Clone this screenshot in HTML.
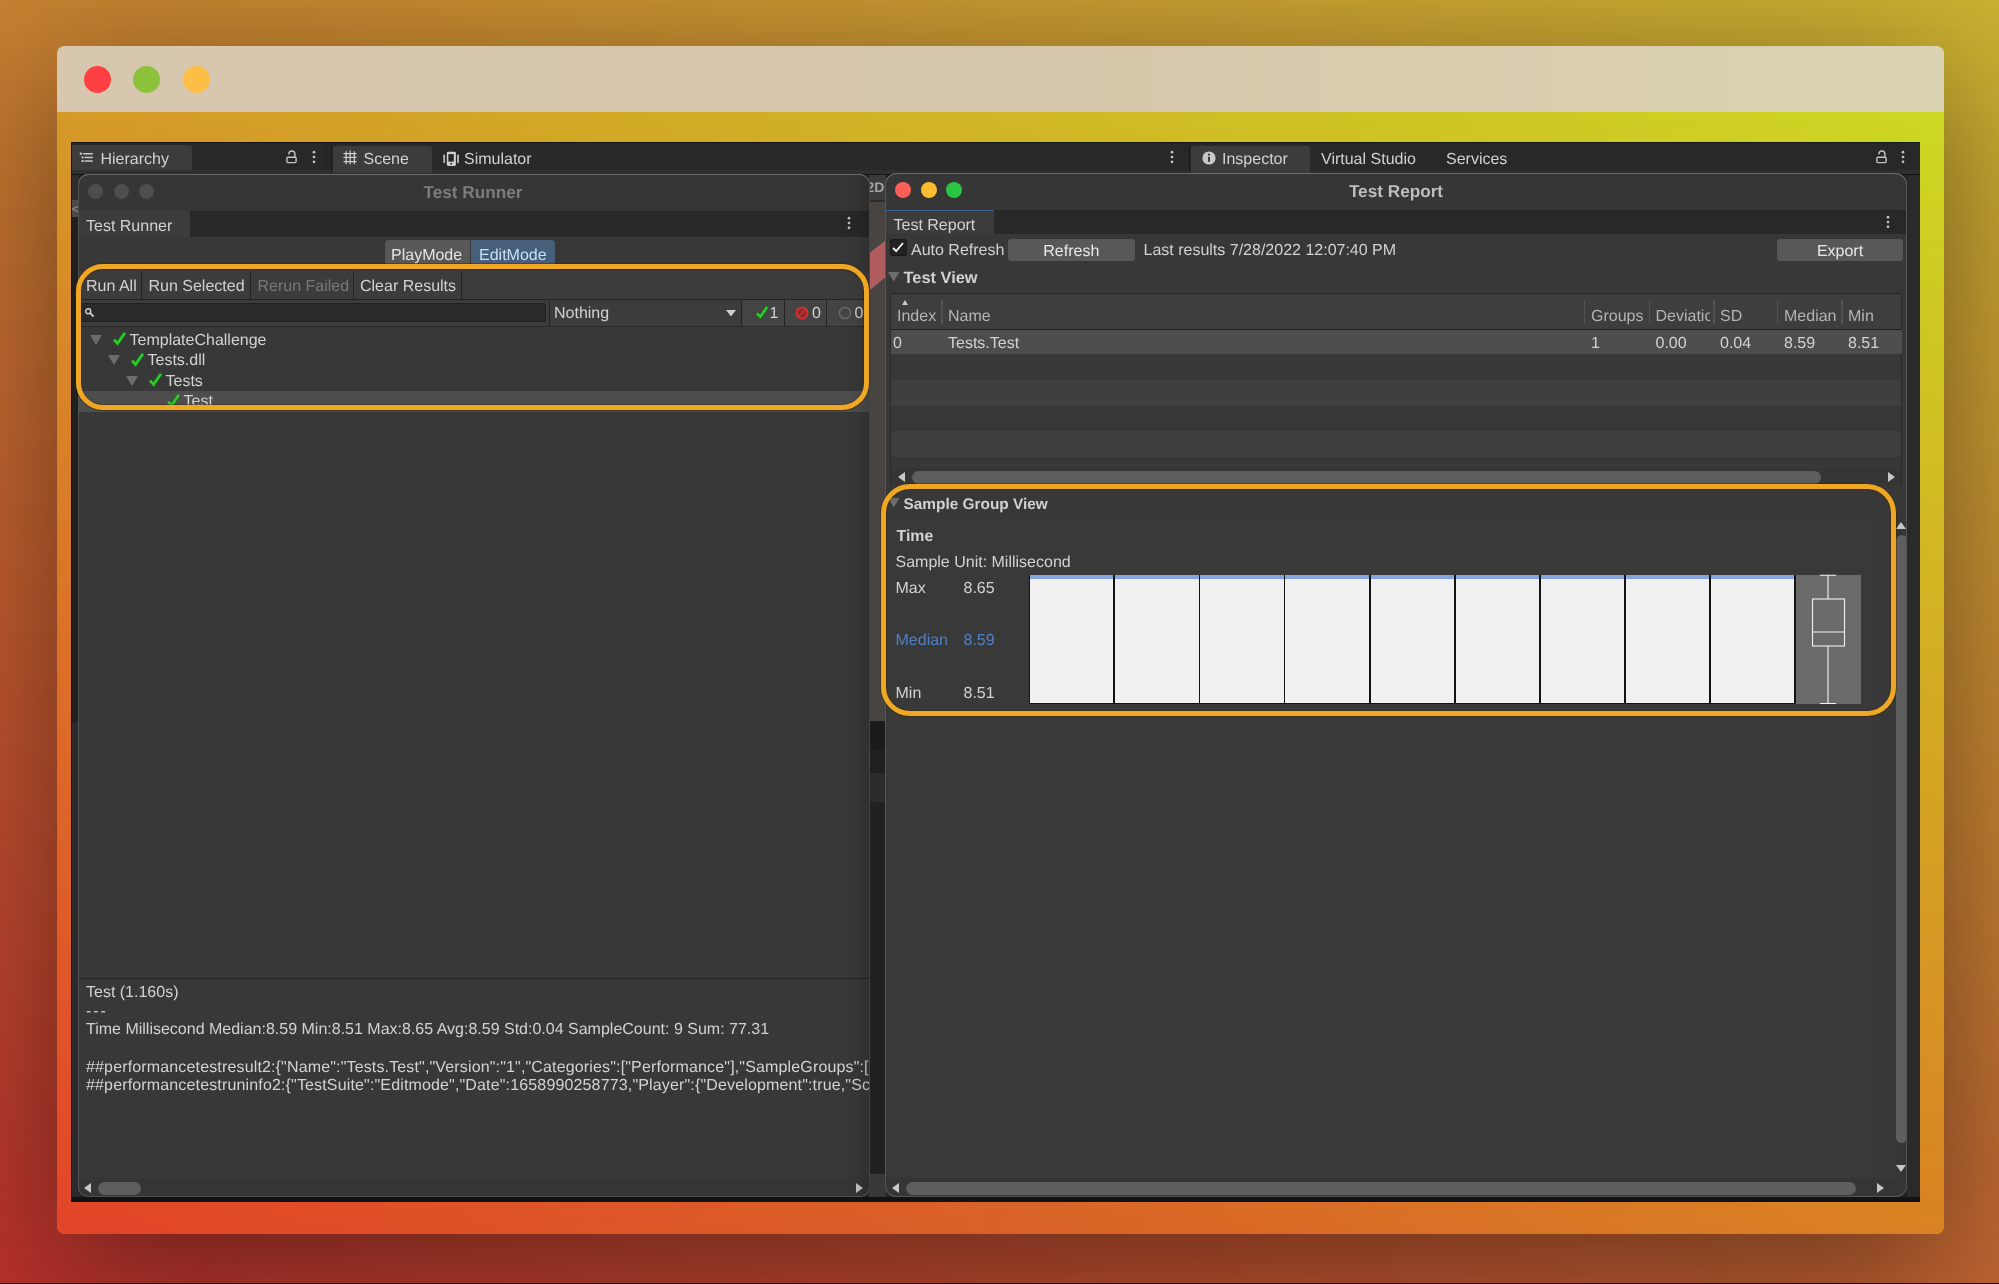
<!DOCTYPE html>
<html><head><meta charset="utf-8"><title>Test Runner</title><style>
html,body{margin:0;padding:0}
body{width:1999px;height:1284px;overflow:hidden;position:relative;background:#b86030;font-family:"Liberation Sans",sans-serif;font-size:16px;color:#d2d2d2;text-rendering:geometricPrecision}
#root{position:absolute;left:0;top:0;width:1999px;height:1284px;will-change:transform}
.b{position:absolute;box-sizing:border-box}
.t{position:absolute;line-height:20px;height:20px;white-space:nowrap;font-size:16px}
.bd{font-weight:bold}
.ttl{font-weight:bold;font-size:17.2px;letter-spacing:0}
#bg{position:absolute;left:0;top:0;width:1999px;height:1284px}
#bg .g1,#bg .g2{position:absolute;left:0;top:0;width:100%;height:100%}
#bg .g1{background:linear-gradient(to right,#c68131 0%,#cab332 100%)}
#bg .g2{background:linear-gradient(to right,#b9302d 0%,#bf6432 100%);-webkit-mask-image:linear-gradient(to bottom,rgba(0,0,0,0) 0%,rgba(0,0,0,1) 100%);mask-image:linear-gradient(to bottom,rgba(0,0,0,0) 0%,rgba(0,0,0,1) 100%)}
#bottomline{position:absolute;left:0;top:1282.5px;width:1999px;height:1.5px;background:#1a0404}
#win{position:absolute;left:56.5px;top:46px;width:1887.5px;height:1188px;border-radius:8px;overflow:hidden;box-shadow:0 35px 140px 0 rgba(0,0,0,0.45)}
#win .w1,#win .w2{position:absolute;left:0;top:0;width:100%;height:100%}
#win .w1{background:linear-gradient(to right,#d59a28 0%,#d0b826 50%,#cdd923 100%)}
#win .w2{background:linear-gradient(to right,#e24428 0%,#d96027 50%,#d98224 100%);-webkit-mask-image:linear-gradient(to bottom,rgba(0,0,0,0) 5%,rgba(0,0,0,1) 100%);mask-image:linear-gradient(to bottom,rgba(0,0,0,0) 5%,rgba(0,0,0,1) 100%)}
#tbar{position:absolute;left:0;top:0;width:100%;height:66px;background:linear-gradient(to right,#d8c7af 0%,#d6c6ab 50%,#dad3b3 100%)}
.tl{position:absolute;top:19.5px;width:27px;height:27px;border-radius:50%}
.hl{position:absolute;box-sizing:border-box;border:5.2px solid #efa724;box-shadow:0 0 0 0.8px rgba(60,35,0,0.55), inset 0 0 0 0.8px rgba(60,35,0,0.55)}
</style></head>
<body>
<div id="root">
<div id="bg"><div class="g1"></div><div class="g2"></div></div>
<div id="win"><div class="w1"></div><div class="w2"></div><div id="tbar"></div><div class="tl" style="left:27.5px;background:#fe4043"></div><div class="tl" style="left:76.5px;background:#8cc23a"></div><div class="tl" style="left:126px;background:#febd45"></div></div>
<div id="bottomline"></div>
<div class="b" style="left:70.5px;top:142px;width:1849.50px;height:1059.60px;background:#131313;"></div>
<div class="b" style="left:71.5px;top:143.2px;width:1848.50px;height:28.80px;background:#282828;"></div>
<div class="b" style="left:71.5px;top:169.6px;width:1848.50px;height:4.90px;background:#2f2f2f;"></div>
<div class="b" style="left:71.5px;top:145.2px;width:120.50px;height:24.80px;background:#3c3c3c;border-radius:0 3px 0 0"></div>
<svg class="b" style="left:79px;top:151px" width="16" height="13" viewBox="0 0 16 13"><g fill="#c8c8c8"><rect x="0.8" y="1.6" width="2.2" height="2.2"/><rect x="4.2" y="2" width="9.6" height="1.5"/><rect x="2.6" y="5.4" width="2" height="2"/><rect x="5.6" y="5.7" width="8.2" height="1.5"/><rect x="2.6" y="9" width="2" height="2"/><rect x="5.6" y="9.3" width="8.2" height="1.5"/></g></svg>
<div class="t " style="left:100.5px;top:150.00px;">Hierarchy</div>
<svg class="b" style="left:285.2px;top:150.3px" width="13" height="14" viewBox="0 0 13 14"><rect x="1.9" y="7.3" width="9.2" height="5.3" rx="1" fill="none" stroke="#c4c4c4" stroke-width="1.4"/><path d="M3.9 4.4 V4 A3 3 0 0 1 9.9 4 V7.3" fill="none" stroke="#c4c4c4" stroke-width="1.4"/></svg>
<svg class="b" style="left:311.6px;top:150px" width="4" height="14" viewBox="0 0 4 14"><circle cx="2" cy="2.2" r="1.35" fill="#c4c4c4"/><circle cx="2" cy="7" r="1.35" fill="#c4c4c4"/><circle cx="2" cy="11.8" r="1.35" fill="#c4c4c4"/></svg>
<div class="b" style="left:326px;top:145px;width:1.00px;height:25.00px;background:#202020;"></div>
<div class="b" style="left:331px;top:145px;width:1.00px;height:27.00px;background:#1a1a1a;"></div>
<div class="b" style="left:332.8px;top:145.6px;width:99.20px;height:27.40px;background:#3c3c3c;border-radius:3px 3px 0 0"></div>
<svg class="b" style="left:343px;top:150px" width="15" height="15" viewBox="0 0 15 15"><g stroke="#cdcdcd" stroke-width="1.25" fill="none"><path d="M3.2 1.2 V14.3 M7.2 0.4 V14.3 M11.3 1.2 V14.3 M0.5 3.6 H13.6 M0.5 7.45 H13.6 M0.5 11.5 H13.6"/></g></svg>
<div class="t " style="left:363.5px;top:150.00px;">Scene</div>
<svg class="b" style="left:442px;top:150px" width="18" height="17" viewBox="0 0 18 17"><rect x="4.8" y="1.7" width="9.1" height="14.3" rx="1.4" fill="#cfcfcf"/><rect x="6.35" y="4.1" width="5.45" height="7.5" fill="#262626"/><circle cx="9.2" cy="13.7" r="0.95" fill="#262626"/><rect x="1.4" y="4.5" width="1.5" height="8.7" rx="0.7" fill="#cfcfcf"/><rect x="15.25" y="4.5" width="1.6" height="8.7" rx="0.7" fill="#cfcfcf"/></svg>
<div class="t " style="left:464px;top:150.00px;">Simulator</div>
<svg class="b" style="left:1170px;top:150px" width="4" height="14" viewBox="0 0 4 14"><circle cx="2" cy="2.2" r="1.35" fill="#c4c4c4"/><circle cx="2" cy="7" r="1.35" fill="#c4c4c4"/><circle cx="2" cy="11.8" r="1.35" fill="#c4c4c4"/></svg>
<div class="b" style="left:1189px;top:145px;width:1.00px;height:27.00px;background:#1a1a1a;"></div>
<div class="b" style="left:1190.8px;top:145.6px;width:119.20px;height:27.40px;background:#3c3c3c;border-radius:3px 3px 0 0"></div>
<svg class="b" style="left:1202px;top:151px" width="14" height="14" viewBox="0 0 14 14"><circle cx="7" cy="7" r="6.6" fill="#c8c8c8"/><rect x="6" y="5.8" width="2" height="5" fill="#3c3c3c"/><circle cx="7" cy="3.6" r="1.15" fill="#3c3c3c"/></svg>
<div class="t " style="left:1222px;top:150.00px;">Inspector</div>
<div class="t " style="left:1321px;top:150.00px;">Virtual Studio</div>
<div class="t " style="left:1446px;top:150.00px;">Services</div>
<svg class="b" style="left:1874.7px;top:150.3px" width="13" height="14" viewBox="0 0 13 14"><rect x="1.9" y="7.3" width="9.2" height="5.3" rx="1" fill="none" stroke="#c4c4c4" stroke-width="1.4"/><path d="M3.9 4.4 V4 A3 3 0 0 1 9.9 4 V7.3" fill="none" stroke="#c4c4c4" stroke-width="1.4"/></svg>
<svg class="b" style="left:1901px;top:150px" width="4" height="14" viewBox="0 0 4 14"><circle cx="2" cy="2.2" r="1.35" fill="#c4c4c4"/><circle cx="2" cy="7" r="1.35" fill="#c4c4c4"/><circle cx="2" cy="11.8" r="1.35" fill="#c4c4c4"/></svg>
<div class="b" style="left:71.5px;top:174.5px;width:1848.50px;height:1026.50px;background:#222222;"></div>
<div class="b" style="left:71.5px;top:174.5px;width:7.50px;height:25.50px;background:#2e2e2e;"></div>
<div class="b" style="left:71.5px;top:200px;width:7.50px;height:17.00px;background:#4a4a4a;"></div>
<div class="t " style="left:71.5px;top:200.00px;color:#8a8a8a;font-size:15px">&lt;</div>
<div class="b" style="left:71.5px;top:217px;width:7.50px;height:505.00px;background:#202020;"></div>
<div class="b" style="left:71.5px;top:722px;width:7.50px;height:479.00px;background:#2a2a2c;"></div>
<div class="b" style="left:869px;top:174.5px;width:17.00px;height:25.00px;background:#3b3b3b;"></div>
<div class="b" style="left:869px;top:199.5px;width:17.00px;height:2.00px;background:#2c2c2c;"></div>
<div class="t bd" style="left:866.5px;top:177.00px;color:#a4a4a4;font-size:14px">2D</div>
<div class="b" style="left:869px;top:201.5px;width:17.00px;height:519.50px;background:#484442;"></div>
<svg class="b" style="left:869px;top:238px" width="16" height="56" viewBox="0 0 16 56"><path d="M1 14.5 L16 3 V39.5 L1 52 Z" fill="#b05d60"/></svg>
<div class="b" style="left:869px;top:721px;width:17.00px;height:29.00px;background:#1b1b1b;"></div>
<div class="b" style="left:869px;top:750px;width:17.00px;height:23.00px;background:#202020;"></div>
<div class="b" style="left:869px;top:773px;width:17.00px;height:29.00px;background:#2c2c2c;"></div>
<div class="b" style="left:869px;top:802px;width:17.00px;height:372.00px;background:#212121;"></div>
<div class="b" style="left:869px;top:1174px;width:17.00px;height:27.00px;background:#383838;"></div>
<div class="b" style="left:1907px;top:174.5px;width:13.00px;height:1022.50px;background:#2a2a2a;"></div>
<div class="b" style="left:71.5px;top:1197px;width:1848.50px;height:4.60px;background:#121212;"></div>
<div class="b" style="left:78px;top:174px;width:792px;height:1023px;overflow:hidden;border-radius:11px 11px 10px 10px;box-shadow:inset 0 0 0 1px #5a5a5a"><div class="b" style="left:-78px;top:-174px;width:1999px;height:1284px"><div class="b" style="left:78px;top:174px;width:792.00px;height:1023.00px;background:#383838;"></div><div class="b" style="left:78px;top:174px;width:792.00px;height:36.50px;background:#363636;"></div><div class="b" style="left:88.0px;top:183.8px;width:15.2px;height:15.2px;border-radius:50%;background:#4e4e4e"></div><div class="b" style="left:113.60000000000001px;top:183.8px;width:15.2px;height:15.2px;border-radius:50%;background:#4e4e4e"></div><div class="b" style="left:139.20000000000002px;top:183.8px;width:15.2px;height:15.2px;border-radius:50%;background:#4e4e4e"></div><div class="t ttl" style="left:273px;width:400px;text-align:center;top:182.00px;color:#7c7c7c">Test Runner</div><div class="b" style="left:78px;top:210.5px;width:792.00px;height:26.70px;background:#282828;"></div><div class="b" style="left:78px;top:211px;width:112.20px;height:26.20px;background:#3c3c3c;"></div><div class="t " style="left:86px;top:217.00px;">Test Runner</div><svg class="b" style="left:847px;top:215.5px" width="4" height="14" viewBox="0 0 4 14"><circle cx="2" cy="2.2" r="1.35" fill="#c4c4c4"/><circle cx="2" cy="7" r="1.35" fill="#c4c4c4"/><circle cx="2" cy="11.8" r="1.35" fill="#c4c4c4"/></svg><div class="b" style="left:385px;top:240px;width:85.00px;height:28.00px;background:#585858;border-radius:4px 0 0 0"></div><div class="b" style="left:470.5px;top:240px;width:84.50px;height:28.00px;background:#46607c;border-radius:0 4px 0 0"></div><div class="t " style="left:391px;top:246.00px;color:#e4e4e4">PlayMode</div><div class="t " style="left:479px;top:246.00px;color:#c9dff7">EditMode</div><div class="b" style="left:78px;top:270.5px;width:792.00px;height:29.00px;background:#3c3c3c;"></div><div class="b" style="left:78px;top:299px;width:792.00px;height:1.00px;background:#232323;"></div><div class="b" style="left:140.5px;top:270.5px;width:1.00px;height:28.50px;background:#242424;"></div><div class="b" style="left:250.0px;top:270.5px;width:1.00px;height:28.50px;background:#242424;"></div><div class="b" style="left:352.5px;top:270.5px;width:1.00px;height:28.50px;background:#242424;"></div><div class="b" style="left:460.5px;top:270.5px;width:1.00px;height:28.50px;background:#242424;"></div><div class="t " style="left:86px;top:277.00px;">Run All</div><div class="t " style="left:148.5px;top:277.00px;">Run Selected</div><div class="t " style="left:257.5px;top:277.00px;color:#787878">Rerun Failed</div><div class="t " style="left:360px;top:277.00px;">Clear Results</div><div class="b" style="left:78px;top:300px;width:792.00px;height:26.50px;background:#3c3c3c;"></div><div class="b" style="left:78px;top:326px;width:792.00px;height:1.00px;background:#2a2a2a;"></div><div class="b" style="left:81px;top:302.5px;width:464.50px;height:19.50px;background:#2a2a2a;border-radius:3px;box-shadow:inset 0 0 0 1px #212121"></div><svg class="b" style="left:84px;top:307px" width="11" height="11" viewBox="0 0 11 11"><circle cx="4.2" cy="4.2" r="2.5" fill="none" stroke="#cfcfcf" stroke-width="1.4"/><path d="M6.2 6.2 L9.6 9.6" stroke="#cfcfcf" stroke-width="1.9"/></svg><div class="b" style="left:548.5px;top:300px;width:1.00px;height:26.00px;background:#242424;"></div><div class="t " style="left:554px;top:304.00px;">Nothing</div><svg class="b" style="left:726.0px;top:309.55px" width="10" height="6.5" viewBox="0 0 10 6.5"><path d="M0 0 H10 L5.0 6.5 Z" fill="#d0d0d0"/></svg><div class="b" style="left:741px;top:300px;width:129.00px;height:26.00px;background:#444444;"></div><div class="b" style="left:740.5px;top:300px;width:1.00px;height:26.00px;background:#242424;"></div><div class="b" style="left:783.5px;top:300px;width:1.00px;height:26.00px;background:#242424;"></div><div class="b" style="left:825.5px;top:300px;width:1.00px;height:26.00px;background:#242424;"></div><svg class="b" style="left:754.875px;top:304.875px" width="14.25" height="14.25" viewBox="0 0 15 15"><path d="M2 8.6 L5.6 12.6 L13 1.8" fill="none" stroke="#1c8c1c" stroke-width="3.5" stroke-linejoin="miter"/><path d="M2.2 8.8 L5.6 12.4 L12.8 2" fill="none" stroke="#2fd22f" stroke-width="2" stroke-linejoin="miter"/></svg><div class="t " style="left:769.5px;top:304.00px;">1</div><svg class="b" style="left:795.3px;top:305.8px" width="14" height="14" viewBox="0 0 14 14"><circle cx="7" cy="7" r="5.5" fill="#8e2a2a" stroke="#c93131" stroke-width="2.2"/><path d="M3.4 10.6 L10.6 3.4" stroke="#c93131" stroke-width="1.8"/></svg><div class="t " style="left:812px;top:304.00px;">0</div><svg class="b" style="left:837.5px;top:306px" width="14" height="14" viewBox="0 0 14 14"><circle cx="7" cy="7" r="5.6" fill="none" stroke="#6a6a6a" stroke-width="1.5"/></svg><div class="t " style="left:854.5px;top:304.00px;">0</div><div class="b" style="left:78px;top:391px;width:792.00px;height:20.50px;background:#4d4d4d;"></div><svg class="b" style="left:90.0px;top:334.5px" width="12" height="10" viewBox="0 0 12 10"><path d="M0 0 H12 L6.0 10 Z" fill="#6c6c6c"/></svg><svg class="b" style="left:112.0px;top:331.0px" width="15.0" height="15.0" viewBox="0 0 15 15"><path d="M2 8.6 L5.6 12.6 L13 1.8" fill="none" stroke="#1c8c1c" stroke-width="3.5" stroke-linejoin="miter"/><path d="M2.2 8.8 L5.6 12.4 L12.8 2" fill="none" stroke="#2fd22f" stroke-width="2" stroke-linejoin="miter"/></svg><div class="t " style="left:129.5px;top:331.00px;">TemplateChallenge</div><svg class="b" style="left:108.0px;top:355.0px" width="12" height="10" viewBox="0 0 12 10"><path d="M0 0 H12 L6.0 10 Z" fill="#6c6c6c"/></svg><svg class="b" style="left:130.0px;top:351.5px" width="15.0" height="15.0" viewBox="0 0 15 15"><path d="M2 8.6 L5.6 12.6 L13 1.8" fill="none" stroke="#1c8c1c" stroke-width="3.5" stroke-linejoin="miter"/><path d="M2.2 8.8 L5.6 12.4 L12.8 2" fill="none" stroke="#2fd22f" stroke-width="2" stroke-linejoin="miter"/></svg><div class="t " style="left:147.5px;top:351.00px;">Tests.dll</div><svg class="b" style="left:126.0px;top:375.5px" width="12" height="10" viewBox="0 0 12 10"><path d="M0 0 H12 L6.0 10 Z" fill="#6c6c6c"/></svg><svg class="b" style="left:148.0px;top:372.0px" width="15.0" height="15.0" viewBox="0 0 15 15"><path d="M2 8.6 L5.6 12.6 L13 1.8" fill="none" stroke="#1c8c1c" stroke-width="3.5" stroke-linejoin="miter"/><path d="M2.2 8.8 L5.6 12.4 L12.8 2" fill="none" stroke="#2fd22f" stroke-width="2" stroke-linejoin="miter"/></svg><div class="t " style="left:165.5px;top:372.00px;">Tests</div><svg class="b" style="left:166.0px;top:392.5px" width="15.0" height="15.0" viewBox="0 0 15 15"><path d="M2 8.6 L5.6 12.6 L13 1.8" fill="none" stroke="#1c8c1c" stroke-width="3.5" stroke-linejoin="miter"/><path d="M2.2 8.8 L5.6 12.4 L12.8 2" fill="none" stroke="#2fd22f" stroke-width="2" stroke-linejoin="miter"/></svg><div class="t " style="left:183.5px;top:392.00px;">Test</div><div class="b" style="left:78px;top:977.5px;width:792.00px;height:1.30px;background:#232323;"></div><div class="t " style="left:86px;top:983.00px;">Test (1.160s)</div><div class="t " style="left:86px;top:1002.00px;letter-spacing:1.9px">---</div><div class="t " style="left:86px;top:1020.00px;">Time Millisecond Median:8.59 Min:8.51 Max:8.65 Avg:8.59 Std:0.04 SampleCount: 9 Sum: 77.31</div><div class="t " style="left:86px;top:1058.00px;letter-spacing:0.15px">##performancetestresult2:{&quot;Name&quot;:&quot;Tests.Test&quot;,&quot;Version&quot;:&quot;1&quot;,&quot;Categories&quot;:[&quot;Performance&quot;],&quot;SampleGroups&quot;:[{</div><div class="t " style="left:86px;top:1076.00px;letter-spacing:0.15px">##performancetestruninfo2:{&quot;TestSuite&quot;:&quot;Editmode&quot;,&quot;Date&quot;:1658990258773,&quot;Player&quot;:{&quot;Development&quot;:true,&quot;Scr</div><div class="b" style="left:78px;top:1177.5px;width:792.00px;height:19.50px;background:#353535;"></div><svg class="b" style="left:84.0px;top:1183px" width="7" height="10" viewBox="0 0 7 10"><path d="M7 0 V10 L0 5 Z" fill="#c8c8c8"/></svg><svg class="b" style="left:855.5px;top:1183px" width="7" height="10" viewBox="0 0 7 10"><path d="M0 0 V10 L7 5 Z" fill="#c8c8c8"/></svg><div class="b" style="left:98px;top:1182px;width:42.50px;height:12.50px;background:#5e5e5e;border-radius:6.5px"></div></div></div>
<div class="b" style="left:78px;top:174px;width:792px;height:1023px;border-radius:11px 11px 10px 10px;box-shadow:inset 0 1px 0 0 #6a6a6a, inset 0 0 0 1px #505050;"></div>
<div class="b" style="left:842px;top:175px;width:27.5px;height:1021px;border-radius:0 11px 10px 0;background:linear-gradient(to right,rgba(0,0,0,0),rgba(0,0,0,0.05) 50%,rgba(0,0,0,0.16))"></div>
<div class="b" style="left:884.8px;top:173px;width:1022.7px;height:1024px;overflow:hidden;border-radius:12px 12px 11px 11px"><div class="b" style="left:-884.8px;top:-173px;width:1999px;height:1284px"><div class="b" style="left:884.8px;top:173px;width:1022.70px;height:1024.00px;background:#383838;"></div><div class="b" style="left:884.8px;top:173px;width:1022.70px;height:36.70px;background:#363636;"></div><div class="b" style="left:894.5px;top:182px;width:16px;height:16px;border-radius:50%;background:#fe5f57"></div><div class="b" style="left:920.7px;top:182px;width:16px;height:16px;border-radius:50%;background:#febc2e"></div><div class="b" style="left:946.3px;top:182px;width:16px;height:16px;border-radius:50%;background:#29c740"></div><div class="t ttl" style="left:1196px;width:400px;text-align:center;top:181.00px;color:#bdbdbd">Test Report</div><div class="b" style="left:884.8px;top:209.7px;width:1022.70px;height:24.10px;background:#282828;"></div><div class="b" style="left:884.8px;top:209.7px;width:109.20px;height:24.10px;background:#3c3c3c;"></div><div class="b" style="left:884.8px;top:209.7px;width:109.20px;height:1.70px;background:#3a6394;"></div><div class="t " style="left:893.5px;top:216.00px;">Test Report</div><svg class="b" style="left:1885.5px;top:214.5px" width="4" height="14" viewBox="0 0 4 14"><circle cx="2" cy="2.2" r="1.35" fill="#c4c4c4"/><circle cx="2" cy="7" r="1.35" fill="#c4c4c4"/><circle cx="2" cy="11.8" r="1.35" fill="#c4c4c4"/></svg><div class="b" style="left:889.5px;top:239px;width:17.00px;height:17.00px;background:#222222;border-radius:3px;box-shadow:inset 0 0 0 1px #1a1a1a"></div><svg class="b" style="left:891px;top:241px" width="14" height="13" viewBox="0 0 14 13"><path d="M2 7 L5.2 10 L12 2" fill="none" stroke="#f0f0f0" stroke-width="1.9"/></svg><div class="t " style="left:911px;top:241.00px;">Auto Refresh</div><div class="b" style="left:1008px;top:239px;width:126.50px;height:21.50px;background:#585858;border-radius:3px"></div><div class="t " style="left:871.3px;width:400px;text-align:center;top:242.00px;color:#e8e8e8">Refresh</div><div class="t " style="left:1143.5px;top:241.00px;">Last results 7/28/2022 12:07:40 PM</div><div class="b" style="left:1777px;top:239px;width:126.00px;height:21.50px;background:#585858;border-radius:3px"></div><div class="t " style="left:1640px;width:400px;text-align:center;top:242.00px;color:#e8e8e8">Export</div><svg class="b" style="left:888.25px;top:272.25px" width="11.5" height="9.5" viewBox="0 0 11.5 9.5"><path d="M0 0 H11.5 L5.75 9.5 Z" fill="#6c6c6c"/></svg><div class="t bd" style="left:903.5px;top:268.00px;font-size:16.4px">Test View</div><div class="b" style="left:890.5px;top:293px;width:1011.50px;height:174.00px;background:#383838;"></div><div class="b" style="left:890.5px;top:293px;width:1011.50px;height:36.00px;background:#3e3e3e;"></div><div class="b" style="left:890.5px;top:292.5px;width:1011.50px;height:1.30px;background:#262626;"></div><div class="b" style="left:890.5px;top:328.5px;width:1011.50px;height:1.30px;background:#1f1f1f;"></div><div class="b" style="left:890.0px;top:293px;width:1.20px;height:193.00px;background:#2a2a2a;"></div><div class="b" style="left:1901.3px;top:293px;width:1.20px;height:193.00px;background:#2a2a2a;"></div><div class="b" style="left:890.5px;top:329.8px;width:1011.50px;height:24.70px;background:#4d4d4d;"></div><div class="b" style="left:891.2px;top:354.5px;width:1010.10px;height:25.50px;background:#383838;"></div><div class="b" style="left:891.2px;top:380px;width:1010.10px;height:25.50px;background:#3f3f3f;"></div><div class="b" style="left:891.2px;top:405.5px;width:1010.10px;height:25.50px;background:#383838;"></div><div class="b" style="left:891.2px;top:431px;width:1010.10px;height:25.50px;background:#3f3f3f;"></div><div class="b" style="left:891.2px;top:456.5px;width:1010.10px;height:11.00px;background:#383838;"></div><div class="b" style="left:941.4px;top:299.5px;width:1.20px;height:24.00px;background:#525252;"></div><div class="b" style="left:1583.9px;top:299.5px;width:1.20px;height:24.00px;background:#525252;"></div><div class="b" style="left:1648.9px;top:299.5px;width:1.20px;height:24.00px;background:#525252;"></div><div class="b" style="left:1713.4px;top:299.5px;width:1.20px;height:24.00px;background:#525252;"></div><div class="b" style="left:1776.9px;top:299.5px;width:1.20px;height:24.00px;background:#525252;"></div><div class="b" style="left:1841.4px;top:299.5px;width:1.20px;height:24.00px;background:#525252;"></div><div class="t " style="left:897px;top:307.00px;color:#b4b4b4">Index</div><div class="t " style="left:948px;top:307.00px;color:#b4b4b4">Name</div><div class="t " style="left:1591px;top:307.00px;color:#b4b4b4">Groups</div><div class="b" style="left:1655.5px;top:307px;width:54.0px;height:20px;overflow:hidden"><div class="t" style="left:0;top:0;color:#b4b4b4">Deviation</div></div><div class="t " style="left:1720px;top:307.00px;color:#b4b4b4">SD</div><div class="t " style="left:1784px;top:307.00px;color:#b4b4b4">Median</div><div class="t " style="left:1848px;top:307.00px;color:#b4b4b4">Min</div><svg class="b" style="left:902px;top:300px" width="6" height="5" viewBox="0 0 6 5"><path d="M0 5 H6 L3 0 Z" fill="#c8c8c8"/></svg><div class="t " style="left:893px;top:334.00px;">0</div><div class="t " style="left:948px;top:334.00px;">Tests.Test</div><div class="t " style="left:1591px;top:334.00px;">1</div><div class="t " style="left:1655.5px;top:334.00px;">0.00</div><div class="t " style="left:1720px;top:334.00px;">0.04</div><div class="t " style="left:1784px;top:334.00px;">8.59</div><div class="t " style="left:1848px;top:334.00px;">8.51</div><div class="b" style="left:891.2px;top:467.5px;width:1010.10px;height:18.50px;background:#353535;"></div><svg class="b" style="left:897.5px;top:472px" width="7" height="10" viewBox="0 0 7 10"><path d="M7 0 V10 L0 5 Z" fill="#c8c8c8"/></svg><svg class="b" style="left:1887.5px;top:472px" width="7" height="10" viewBox="0 0 7 10"><path d="M0 0 V10 L7 5 Z" fill="#c8c8c8"/></svg><div class="b" style="left:912px;top:470.5px;width:908.50px;height:13.00px;background:#5e5e5e;border-radius:6.5px"></div><div class="b" style="left:884.8px;top:519px;width:992.70px;height:658.00px;background:#393939;"></div><svg class="b" style="left:888.25px;top:498.25px" width="11.5" height="9.5" viewBox="0 0 11.5 9.5"><path d="M0 0 H11.5 L5.75 9.5 Z" fill="#6c6c6c"/></svg><div class="t bd" style="left:903.5px;top:495.00px;font-size:15.4px">Sample Group View</div><div class="t bd" style="left:896.5px;top:527.00px;font-size:15.9px">Time</div><div class="t " style="left:895.5px;top:553.00px;">Sample Unit: Millisecond</div><div class="t " style="left:895.5px;top:579.00px;">Max</div><div class="t " style="left:963.5px;top:579.00px;">8.65</div><div class="t " style="left:895.5px;top:631.00px;color:#4f80c4">Median</div><div class="t " style="left:963.5px;top:631.00px;color:#4f80c4">8.59</div><div class="t " style="left:895.5px;top:684.00px;">Min</div><div class="t " style="left:963.5px;top:684.00px;">8.51</div><div class="b" style="left:1029.2px;top:574.6px;width:766.80px;height:129.30px;background:#141414;"></div><div class="b" style="left:1030.1px;top:575px;width:83.32px;height:128.20px;background:#f1f1f1;"></div><div class="b" style="left:1030.1px;top:575px;width:83.32px;height:3.80px;background:#86a5dd;"></div><div class="b" style="left:1030.1px;top:578.8px;width:83.32px;height:1.20px;background:#e4eaf4;"></div><div class="b" style="left:1115.2199999999998px;top:575px;width:83.32px;height:128.20px;background:#f1f1f1;"></div><div class="b" style="left:1115.2199999999998px;top:575px;width:83.32px;height:3.80px;background:#86a5dd;"></div><div class="b" style="left:1115.2199999999998px;top:578.8px;width:83.32px;height:1.20px;background:#e4eaf4;"></div><div class="b" style="left:1200.34px;top:575px;width:83.32px;height:128.20px;background:#f1f1f1;"></div><div class="b" style="left:1200.34px;top:575px;width:83.32px;height:3.80px;background:#86a5dd;"></div><div class="b" style="left:1200.34px;top:578.8px;width:83.32px;height:1.20px;background:#e4eaf4;"></div><div class="b" style="left:1285.46px;top:575px;width:83.32px;height:128.20px;background:#f1f1f1;"></div><div class="b" style="left:1285.46px;top:575px;width:83.32px;height:3.80px;background:#86a5dd;"></div><div class="b" style="left:1285.46px;top:578.8px;width:83.32px;height:1.20px;background:#e4eaf4;"></div><div class="b" style="left:1370.58px;top:575px;width:83.32px;height:128.20px;background:#f1f1f1;"></div><div class="b" style="left:1370.58px;top:575px;width:83.32px;height:3.80px;background:#86a5dd;"></div><div class="b" style="left:1370.58px;top:578.8px;width:83.32px;height:1.20px;background:#e4eaf4;"></div><div class="b" style="left:1455.6999999999998px;top:575px;width:83.32px;height:128.20px;background:#f1f1f1;"></div><div class="b" style="left:1455.6999999999998px;top:575px;width:83.32px;height:3.80px;background:#86a5dd;"></div><div class="b" style="left:1455.6999999999998px;top:578.8px;width:83.32px;height:1.20px;background:#e4eaf4;"></div><div class="b" style="left:1540.82px;top:575px;width:83.32px;height:128.20px;background:#f1f1f1;"></div><div class="b" style="left:1540.82px;top:575px;width:83.32px;height:3.80px;background:#86a5dd;"></div><div class="b" style="left:1540.82px;top:578.8px;width:83.32px;height:1.20px;background:#e4eaf4;"></div><div class="b" style="left:1625.94px;top:575px;width:83.32px;height:128.20px;background:#f1f1f1;"></div><div class="b" style="left:1625.94px;top:575px;width:83.32px;height:3.80px;background:#86a5dd;"></div><div class="b" style="left:1625.94px;top:578.8px;width:83.32px;height:1.20px;background:#e4eaf4;"></div><div class="b" style="left:1711.06px;top:575px;width:83.32px;height:128.20px;background:#f1f1f1;"></div><div class="b" style="left:1711.06px;top:575px;width:83.32px;height:3.80px;background:#86a5dd;"></div><div class="b" style="left:1711.06px;top:578.8px;width:83.32px;height:1.20px;background:#e4eaf4;"></div><div class="b" style="left:1796px;top:575px;width:65.00px;height:128.50px;background:#6a6a6a;"></div><svg class="b" style="left:1796px;top:573px" width="65" height="133" viewBox="0 0 65 133"><g stroke="#f2f2f2" stroke-width="1.1" fill="none"><path d="M24 2.3 H40 M32 2.3 V26 M32 73 V130.5 M24 130.5 H40 M16.5 59 H48.5"/><rect x="16.5" y="26" width="32" height="47"/></g></svg><div class="b" style="left:1895.5px;top:519px;width:12.00px;height:658.00px;background:#353535;"></div><svg class="b" style="left:1896px;top:521.5px" width="10" height="7" viewBox="0 0 10 7"><path d="M0 7 H10 L5 0 Z" fill="#c8c8c8"/></svg><svg class="b" style="left:1896px;top:1165.0px" width="10" height="7" viewBox="0 0 10 7"><path d="M0 0 H10 L5 7 Z" fill="#c8c8c8"/></svg><div class="b" style="left:1896px;top:535px;width:11.00px;height:608.00px;background:#5e5e5e;border-radius:5.5px"></div><div class="b" style="left:884.8px;top:1177.5px;width:1022.70px;height:19.50px;background:#353535;"></div><svg class="b" style="left:891.5px;top:1183px" width="7" height="10" viewBox="0 0 7 10"><path d="M7 0 V10 L0 5 Z" fill="#c8c8c8"/></svg><svg class="b" style="left:1877.0px;top:1183px" width="7" height="10" viewBox="0 0 7 10"><path d="M0 0 V10 L7 5 Z" fill="#c8c8c8"/></svg><div class="b" style="left:905.5px;top:1182px;width:950.00px;height:12.50px;background:#5e5e5e;border-radius:6.5px"></div></div></div>
<div class="b" style="left:884.8px;top:173px;width:1022.7px;height:1024px;border-radius:12px 12px 11px 11px;box-shadow:inset 0 1px 0 0 #6a6a6a, inset 0 0 0 1px #555;"></div>
<div class="hl" style="left:76px;top:263.5px;width:793px;height:146.5px;border-radius:27px"></div>
<div class="hl" style="left:881px;top:484px;width:1014.5px;height:232px;border-radius:29px"></div>
</div>
</body></html>
